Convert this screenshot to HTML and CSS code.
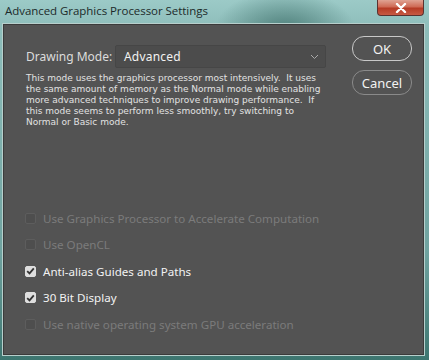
FILE: index.html
```html
<!DOCTYPE html>
<html lang="en">
<head>
  <meta charset="UTF-8" />
  <title>Advanced Graphics Processor Settings</title>
  <link rel="stylesheet" href="styles.css">
</head>
<body>
  <div class="window">
    <div class="titlebar">
      <span class="title">Advanced Graphics Processor Settings</span>
      <span class="close">
        <svg width="14" height="10" viewBox="0 0 14 10">
          <path d="M3 1 L11 9 M11 1 L3 9" stroke="#fff" stroke-width="2.4" stroke-linecap="round" />
        </svg>
      </span>
    </div>
    <div class="panel">
      <div class="top">
        <div class="main">
          <div class="mode-row">
            <label class="mode-label">Drawing Mode:</label>
            <div class="select">
              <span>Advanced</span>
              <svg width="9" height="6" viewBox="0 0 9 6">
                <path d="M1 1 L4.5 4.5 L8 1" fill="none" stroke="#aaa" stroke-width="1" />
              </svg>
            </div>
          </div>
          <p class="desc">This mode uses the graphics processor most intensively.&nbsp; It uses<br>the same amount of memory as the Normal mode while enabling<br>more advanced techniques to improve drawing performance.&nbsp; If<br>this mode seems to perform less smoothly, try switching to<br>Normal or Basic mode.</p>
        </div>
        <div class="buttons">
          <button class="btn btn-default">OK</button>
          <button class="btn">Cancel</button>
        </div>
      </div>
      <ul class="options">
        <li class="disabled"><span class="box"></span>Use Graphics Processor to Accelerate Computation</li>
        <li class="disabled"><span class="box"></span>Use OpenCL</li>
        <li><span class="box checked"><svg width="9" height="8" viewBox="0 0 9 8"><path d="M1.2 4.2 L3.5 6.4 L7.8 1.4" fill="none" stroke="#333" stroke-width="1.8" /></svg></span>Anti-alias Guides and Paths</li>
        <li><span class="box checked"><svg width="9" height="8" viewBox="0 0 9 8"><path d="M1.2 4.2 L3.5 6.4 L7.8 1.4" fill="none" stroke="#333" stroke-width="1.8" /></svg></span>30 Bit Display</li>
        <li class="disabled"><span class="box"></span>Use native operating system GPU acceleration</li>
      </ul>
    </div>
  </div>
</body>
</html>
```

FILE: styles.css
```css
body {
  margin: 0;
  font-family: "Noto Sans", "Open Sans", sans-serif;
}
.window {
  width: 429px;
  height: 360px;
  box-sizing: border-box;
  padding: 0 5px 0 3px;
  background:
    radial-gradient(ellipse 70px 40px at 285px 30px, #4f807b 0%, rgba(79,128,123,0) 100%),
    linear-gradient(180deg, #9ccac7 0%, #8dbdba 8%, #6fa29f 70%, #3d7670 100%);
  overflow: hidden;
}
.titlebar {
  height: 24px;
  display: flex;
  align-items: flex-start;
  justify-content: space-between;
}
.title {
  margin: 3px 0 0 2px;
  font-family: "Open Sans", sans-serif;
  font-size: 11.5px;
  color: #1c2a2a;
  letter-spacing: -0.05px;
}
.close {
  width: 47px;
  height: 16px;
  border: 1px solid #5a3230;
  border-top: none;
  border-radius: 0 0 4px 4px;
  background: linear-gradient(180deg, #e0a393 0%, #cf6a55 45%, #b63b25 55%, #c75a44 100%);
  display: flex;
  align-items: center;
  justify-content: center;
  box-sizing: border-box;
}
.panel {
  height: 331px;
  box-sizing: border-box;
  background: #535353;
  border: 1px solid #3b3b3b;
  outline: 1px solid #b7cfcc;
  padding: 11px 11px 0 22px;
}
.top {
  display: flex;
  justify-content: space-between;
}
.main {
  width: 300px;
  padding-top: 9px;
}
.mode-row {
  display: flex;
  align-items: center;
}
.mode-label {
  flex-shrink: 0;
  white-space: nowrap;
  font-size: 12px;
  color: #dcdcdc;
  width: 89px;
}
.select {
  width: 211px;
  height: 23px;
  box-sizing: border-box;
  border: 1px solid #464646;
  border-radius: 2px;
  background: #4c4c4c;
  display: flex;
  align-items: center;
  justify-content: space-between;
  padding: 0 6px 0 8px;
  font-size: 12px;
  letter-spacing: 0.2px;
  color: #f2f2f2;
}
.desc {
  margin: 5px 0 0;
  font-family: "DejaVu Sans", sans-serif;
  font-size: 9px;
  line-height: 11px;
  color: #e2e2e2;
  white-space: nowrap;
}
.buttons {
  display: flex;
  flex-direction: column;
  gap: 9px;
}
.btn {
  width: 60px;
  height: 25px;
  border-radius: 12px;
  border: 1.5px solid #c8c8c8;
  background: #535353;
  color: #f2f2f2;
  font-family: "Noto Sans", sans-serif;
  font-size: 13px;
  padding: 0;
}
.btn + .btn {
  border-color: #8a8a8a;
}
.options {
  list-style: none;
  margin: 77px 0 0 -1px;
  padding: 0;
}
.options li {
  display: flex;
  align-items: center;
  height: 26.5px;
  font-size: 11.6px;
  color: #f2f2f2;
}
.options li.disabled {
  color: #7b7b7b;
}
.box {
  width: 11px;
  height: 11px;
  box-sizing: border-box;
  border-radius: 2px;
  margin-right: 7px;
  border: 1px solid #5d5d5d;
  background: #4e4e4e;
  display: flex;
  align-items: center;
  justify-content: center;
}
.box.checked {
  background: #dedede;
  border-color: #dedede;
}
```
